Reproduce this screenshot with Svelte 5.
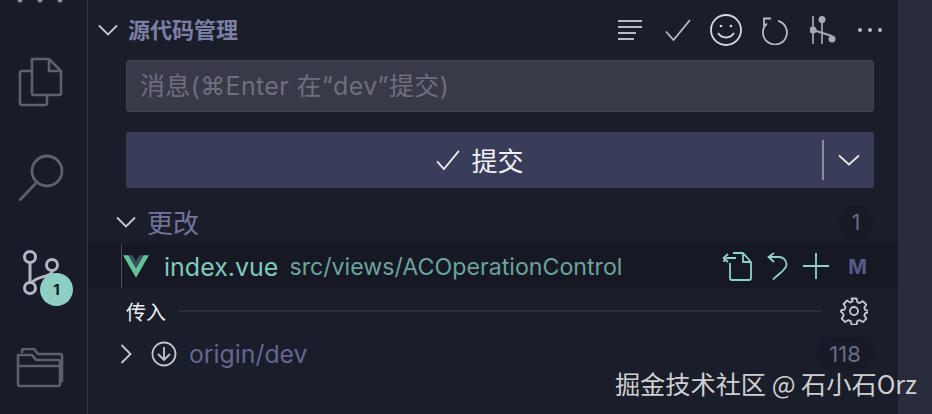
<script>
    let file = { name: 'index.vue', path: 'src/views/ACOperationControl', status: 'M' }
</script>

<div class="window">
    <nav class="activity">
        <svg class="icon-top" width="46" height="4" viewBox="0 0 46 4"><g fill="#8b8d98"><circle cx="3" cy="0" r="2.5"/><circle cx="23" cy="0" r="2.5"/><circle cx="43" cy="0" r="2.5"/></g></svg>
        <svg class="files" width="46" height="50" viewBox="0 0 46 50" fill="none" stroke="#5e606c" stroke-width="2.6" stroke-linejoin="round">
            <path d="M14 2h17l12 12v22a2 2 0 0 1-2 2H16a2 2 0 0 1-2-2z"/>
            <path d="M31 2v12h12"/>
            <path d="M14 14H4a2 2 0 0 0-2 2v30a2 2 0 0 0 2 2h23a2 2 0 0 0 2-2v-8"/>
        </svg>
        <svg class="search" width="46" height="48" viewBox="0 0 46 48" fill="none" stroke="#5e606c" stroke-width="2.8">
            <circle cx="29" cy="17" r="15"/>
            <path d="M18 29 1.500 46.500"/>
        </svg>
        <div class="git">
            <svg width="40" height="48" viewBox="0 0 40 48" fill="none" stroke="#b4b6c6" stroke-width="3">
                <circle cx="7" cy="7" r="5.500"/>
                <circle cx="7" cy="38" r="5.500"/>
                <circle cx="29" cy="15" r="5.500"/>
                <path d="M7 13v19M29 21c0 7-16 4-20 12"/>
            </svg>
            <span class="badge">1</span>
        </div>
        <svg class="folder" width="48" height="40" viewBox="0 0 48 40" fill="none" stroke="#5e606c" stroke-width="2.6" stroke-linejoin="round">
            <path d="M6 5V3a2 2 0 0 1 2-2h10l4 5h22a2 2 0 0 1 2 2v26"/>
            <path d="M2 7h14l4 5h22a2 2 0 0 1 2 2v22a2 2 0 0 1-2 2H4a2 2 0 0 1-2-2z"/>
            <path d="M2 18h42"/>
        </svg>
    </nav>

    <main class="panel">
        <header class="title-row">
            <svg class="chev" width="20" height="12" viewBox="0 0 20 12" fill="none" stroke="#c9cad4" stroke-width="1.800"><path d="M1 1.500 10 10.500 19 1.500"/></svg>
            <span class="title">源代码管理</span>
            <div class="actions">
                <svg width="24" height="20" viewBox="0 0 24 20" stroke="#b9bac2" stroke-width="1.800"><path d="M0 1h24M0 7h24M0 13h18M0 19h16"/></svg>
                <svg width="26" height="22" viewBox="0 0 26 22" fill="none" stroke="#b9bac2" stroke-width="1.800"><path d="M1 12.500 8.500 21 25 1"/></svg>
                <svg width="32" height="32" viewBox="0 0 32 32" fill="none" stroke="#d6d7dd" stroke-width="1.800"><circle cx="16" cy="16" r="15"/><path d="M8 19c4 6 12 6 16 0"/><circle cx="11" cy="12" r="1.300" fill="#d6d7dd" stroke="none"/><circle cx="21" cy="12" r="1.300" fill="#d6d7dd" stroke="none"/></svg>
                <svg width="26" height="30" viewBox="0 0 26 30" fill="none" stroke="#b9bac2" stroke-width="1.800"><path d="M16 5.900A12 12 0 1 1 5 8.500"/><path d="M9 3.500H2V11"/></svg>
                <svg width="26" height="28" viewBox="0 0 26 28" fill="none" stroke="#8f909a" stroke-width="2"><path d="M3 0v28M12 4v24"/><path d="M3 14l19 6" stroke="#a9aab2"/><g fill="#a9aab2" stroke="none"><circle cx="3" cy="14" r="3.500"/><circle cx="12" cy="3.500" r="3.500"/><circle cx="22" cy="23" r="3.500"/></g></svg>
                <svg width="24" height="6" viewBox="0 0 24 6" fill="#b9bac2"><circle cx="2" cy="3" r="2"/><circle cx="12" cy="3" r="2"/><circle cx="22" cy="3" r="2"/></svg>
            </div>
        </header>

        <div class="body">
            <div class="input">消息(⌘Enter 在“dev”提交)</div>

            <div class="commit">
                <div class="commit-label">
                    <svg width="24" height="20" viewBox="0 0 26 22" fill="none" stroke="#f0f0f4" stroke-width="1.900"><path d="M1 12.500 8.500 21 25 1"/></svg>
                    <span>提交</span>
                </div>
                <span class="divider"></span>
                <svg class="commit-more" width="22" height="12" viewBox="0 0 22 12" fill="none" stroke="#e4e4ea" stroke-width="1.800"><path d="M1 1.500 11 10.500 21 1.500"/></svg>
            </div>
        </div>

        <div class="changes-row">
            <svg width="20" height="12" viewBox="0 0 20 12" fill="none" stroke="#c9cad4" stroke-width="1.800"><path d="M1 1.500 10 10.500 19 1.500"/></svg>
            <span class="changes-label">更改</span>
            <span class="count">1</span>
        </div>

        <div class="file-row">
            <span class="guide"></span>
            <svg class="vue" width="26" height="23" viewBox="0 0 28 24"><path d="M0 0h6l8 14L22 0h6L14 24z" fill="#62c29a"/><path d="M6 0h4.500L14 6l3.500-6H22l-8 14z" fill="#3c4f5e"/></svg>
            <span class="file-name">{file.name}</span>
            <span class="file-path">{file.path}</span>
            <div class="file-actions">
                <svg width="30" height="29" viewBox="0 0 30 29" fill="none" stroke="#8fd3c8" stroke-width="1.800" stroke-linejoin="round"><path d="M8 11v15a2 2 0 0 0 2 2h17a2 2 0 0 0 2-2V10l-8-9H11"/><path d="M21 1v9h8"/><path d="M14 6H6a4 4 0 0 0-4 4M6 2 1.500 6 6 10"/></svg>
                <svg width="21" height="28" viewBox="0 0 21 28" fill="none" stroke="#8fd3c8" stroke-width="1.800"><path d="M2 5h10a7.500 7.500 0 0 1 7.500 7.500c0 5.500-8 9-13.500 15"/><path d="M7 1 1.500 5 7 10"/></svg>
                <svg width="26" height="26" viewBox="0 0 26 26" stroke="#8fd3c8" stroke-width="1.800"><path d="M13 0v26M0 13h26"/></svg>
                <span class="status">{file.status}</span>
            </div>
        </div>

        <div class="incoming-row">
            <span class="incoming-label">传入</span>
            <span class="rule"></span>
            <svg width="28" height="28" viewBox="0 0 28 28" fill="none" stroke="#c7c8d0" stroke-width="1.800" stroke-linejoin="round"><circle cx="14" cy="14" r="4"/><path d="M11.500 1.500h5l.8 3.600 2.300 1 3.200-2 3.500 3.500-2 3.200 1 2.300 3.600.8v1.400l-3.600.8-1 2.300 2 3.200-3.500 3.500-3.200-2-2.300 1-.8 3.600h-5l-.8-3.600-2.300-1-3.200 2-3.500-3.500 2-3.200-1-2.300L1 14.700v-1.400l3.600-.8 1-2.300-2-3.200 3.500-3.500 3.200 2 2.300-1z"/></svg>
        </div>

        <div class="origin-row">
            <svg width="12" height="20" viewBox="0 0 12 20" fill="none" stroke="#c9cad4" stroke-width="1.800"><path d="M1.500 1 10.500 10 1.500 19"/></svg>
            <svg class="down" width="26" height="26" viewBox="0 0 26 26" fill="none" stroke="#c4c5cd" stroke-width="1.800"><circle cx="13" cy="13" r="11.500"/><path d="M13 6v13M7 13l6 6 6-6"/></svg>
            <span class="origin-label">origin/dev</span>
            <span class="count wide">118</span>
        </div>
    </main>

    <aside class="strip"></aside>
    <div class="watermark">掘金技术社区 @ 石小石Orz</div>
</div>

<style>
    :global(body) {
        margin: 0;
        background: #1a1d2a;
        overflow: hidden;
    }

    .window {
        position: relative;
        display: flex;
        width: 932px;
        height: 414px;
        overflow: hidden;
        font-family: Inter, "Noto Sans CJK SC", sans-serif;
        background: #1a1d2a;
    }

    .activity {
        width: 88px;
        flex: none;
        box-sizing: border-box;
        border-right: 1px solid #31343f;
        background: #191b28;
        display: flex;
        flex-direction: column;
        align-items: flex-start;
    }

    .icon-top { margin-left: 17px; }
    .files { margin: 53px 0 0 18px; }
    .search { margin: 47px 0 0 18px; }
    .git { position: relative; margin: 48px 0 0 23px; height: 48px; }
    .git svg { display: block; }
    .folder { margin: 50px 0 0 16px; }

    .badge {
        position: absolute;
        left: 17px;
        top: 23px;
        width: 33px;
        height: 33px;
        border-radius: 50%;
        background: #8ecfc4;
        color: #16181f;
        font-size: 15px;
        font-weight: 700;
        display: flex;
        align-items: center;
        justify-content: center;
    }

    .panel {
        width: 810px;
        flex: none;
    }

    .title-row {
        height: 60px;
        display: flex;
        align-items: center;
        padding-left: 10px;
        box-sizing: border-box;
    }

    .title {
        margin: 0 0 4px 10px;
        font-size: 22px;
        font-weight: 700;
        color: #7c7fa4;
    }

    .actions {
        margin-left: auto;
        margin-right: 16px;
        display: flex;
        align-items: center;
    }

    .actions svg:nth-child(2) { margin-left: 23px; }
    .actions svg:nth-child(3) { margin-left: 19px; }
    .actions svg:nth-child(4) { margin-left: 20px; }
    .actions svg:nth-child(5) { margin-left: 22px; }
    .actions svg:nth-child(6) { margin-left: 22px; }

    .body {
        padding: 0 24px 12px 38px;
    }

    .input {
        height: 52px;
        box-sizing: border-box;
        background: #383a48;
        border: 1px solid #414350;
        border-radius: 3px;
        color: #6d6f7e;
        font-size: 25px;
        letter-spacing: 0.35px;
        line-height: 51px;
        padding-left: 13px;
    }

    .commit {
        margin-top: 20px;
        height: 56px;
        background: #3a3d59;
        border-radius: 3px;
        display: flex;
        align-items: center;
        color: #f2f2f6;
    }

    .commit-label {
        flex: 1;
        display: flex;
        align-items: center;
        justify-content: center;
        gap: 11px;
        padding-left: 12px;
        font-size: 26px;
    }

    .commit-label span { margin-bottom: 2px; }

    .divider {
        width: 2px;
        height: 40px;
        background: #8a8ca0;
    }

    .commit-more {
        margin: 0 14px;
    }

    .changes-row {
        height: 44px;
        display: flex;
        align-items: center;
        padding: 0 25px 0 28px;
    }

    .changes-label {
        margin: 0 0 2px 11px;
        font-size: 26px;
        color: #72749a;
    }

    .count {
        margin-left: auto;
        width: 34px;
        height: 34px;
        border-radius: 17px;
        background: #181a26;
        color: #6a6c88;
        font-size: 21px;
        display: flex;
        align-items: center;
        justify-content: center;
    }

    .count.wide {
        width: 58px;
        margin-right: -12px;
        font-size: 22px;
    }

    .file-row {
        height: 44px;
        background: #161823;
        display: flex;
        align-items: center;
        position: relative;
        padding-left: 35px;
    }

    .guide {
        position: absolute;
        left: 33px;
        top: 0;
        bottom: 0;
        width: 1px;
        background: #4b4e60;
    }

    .vue { flex: none; }

    .file-name {
        margin: 2px 0 0 15px;
        font-size: 25px;
        color: #7fcbbb;
    }

    .file-path {
        margin: 2px 0 0 11px;
        font-size: 23.200px;
        color: #6aa49c;
    }

    .file-actions {
        margin-left: auto;
        margin-right: 31px;
        display: flex;
        align-items: center;
        gap: 15px;
    }

    .status {
        margin: 2px 0 0 4px;
        font-size: 20px;
        font-weight: 700;
        color: #565a8c;
    }

    .incoming-row {
        height: 46px;
        display: flex;
        align-items: center;
        padding: 0 30px 0 38px;
        margin-bottom: -1px;
    }

    .incoming-label {
        font-size: 20px;
        color: #eeeef2;
    }

    .rule {
        flex: 1;
        height: 2px;
        margin: 0 18px 0 12px;
        background: #2c2e3c;
    }

    .origin-row {
        height: 42px;
        display: flex;
        align-items: center;
        padding: 0 36px 0 32px;
    }

    .down { margin-left: 19px; }

    .origin-label {
        margin-left: 12px;
        font-size: 24.800px;
        color: #646690;
    }

    .strip {
        flex: 1;
        background: #292c3c;
    }

    .watermark {
        position: absolute;
        right: 15px;
        bottom: 13px;
        font-family: "Noto Sans CJK SC", sans-serif;
        font-size: 25.200px;
        color: #cfcfcf;
        white-space: nowrap;
    }
</style>
